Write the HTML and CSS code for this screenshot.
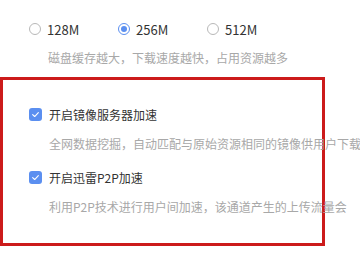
FILE: index.html
```html
<!DOCTYPE html>
<html lang="zh-CN">
<head>
    <meta charset="UTF-8">
    <title>下载设置</title>
    <link rel="stylesheet" href="styles.css">
</head>
<body>
    <div class="panel">
        <!-- 磁盘缓存 -->
        <div class="cache">
            <div class="radio-group">
                <label class="radio"><span class="dot"></span>128M</label>
                <label class="radio checked"><span class="dot"></span>256M</label>
                <label class="radio"><span class="dot"></span>512M</label>
            </div>
            <p class="hint">磁盘缓存越大，下载速度越快，占用资源越多</p>
        </div>

        <!-- 加速选项 -->
        <div class="accel">
            <div class="option">
                <label class="check"><span class="box"><svg viewBox="0 0 12 12" width="9" height="9"><path d="M2.2 6.2 L4.9 8.7 L9.8 3.4" fill="none" stroke="#fff" stroke-width="1.5" stroke-linecap="round" stroke-linejoin="round"/></svg></span>开启镜像服务器加速</label>
                <p class="hint">全网数据挖掘，自动匹配与原始资源相同的镜像供用户下载</p>
            </div>
            <div class="option">
                <label class="check"><span class="box"><svg viewBox="0 0 12 12" width="9" height="9"><path d="M2.2 6.2 L4.9 8.7 L9.8 3.4" fill="none" stroke="#fff" stroke-width="1.5" stroke-linecap="round" stroke-linejoin="round"/></svg></span>开启迅雷P2P加速</label>
                <p class="hint">利用P2P技术进行用户间加速，该通道产生的上传流量会</p>
            </div>
        </div>
    </div>
</body>
</html>
```

FILE: styles.css
```css
* {
    margin: 0;
    padding: 0;
    box-sizing: border-box;
    font-family: 'Segoe UI', 'Noto Sans CJK SC', 'Microsoft YaHei', sans-serif;
}

html, body {
    width: 360px;
    height: 270px;
    overflow: hidden;
    background: #fff;
}

.panel {
    width: 360px;
}

.cache {
    padding: 20px 0 0 29px;
    height: 77px;
}

.radio-group {
    display: flex;
    height: 18px;
    align-items: center;
}

.radio {
    display: flex;
    align-items: center;
    font-size: 13px;
    color: #333;
    width: 89px;
}

.radio .dot {
    width: 12px;
    height: 12px;
    border: 1px solid #b8b8b8;
    border-radius: 50%;
    margin-right: 6px;
    position: relative;
}

.radio.checked .dot {
    border-color: #5b8ff0;
}

.radio.checked .dot::after {
    content: "";
    position: absolute;
    top: 2px;
    left: 2px;
    width: 6px;
    height: 6px;
    border-radius: 50%;
    background: #5b8ff0;
}

.hint {
    font-size: 12px;
    color: #a8a8a8;
    white-space: nowrap;
    padding-left: 19px;
    line-height: 18px;
}

.cache .hint {
    margin-top: 11px;
}

/* 红框 */
.accel {
    width: 325px;
    height: 169px;
    border: 3px solid #cc1b1b;
    padding: 25px 0 0 26px;
}

.option {
    height: 63px;
}

.check {
    display: flex;
    align-items: center;
    height: 18px;
    font-size: 12px;
    color: #333;
}

.check .box {
    width: 13px;
    height: 13px;
    border-radius: 3px;
    background: #5b8ff0;
    margin-right: 7px;
    display: flex;
    align-items: center;
    justify-content: center;
}

.option .hint {
    margin-top: 12px;
    padding-left: 20px;
}
```
